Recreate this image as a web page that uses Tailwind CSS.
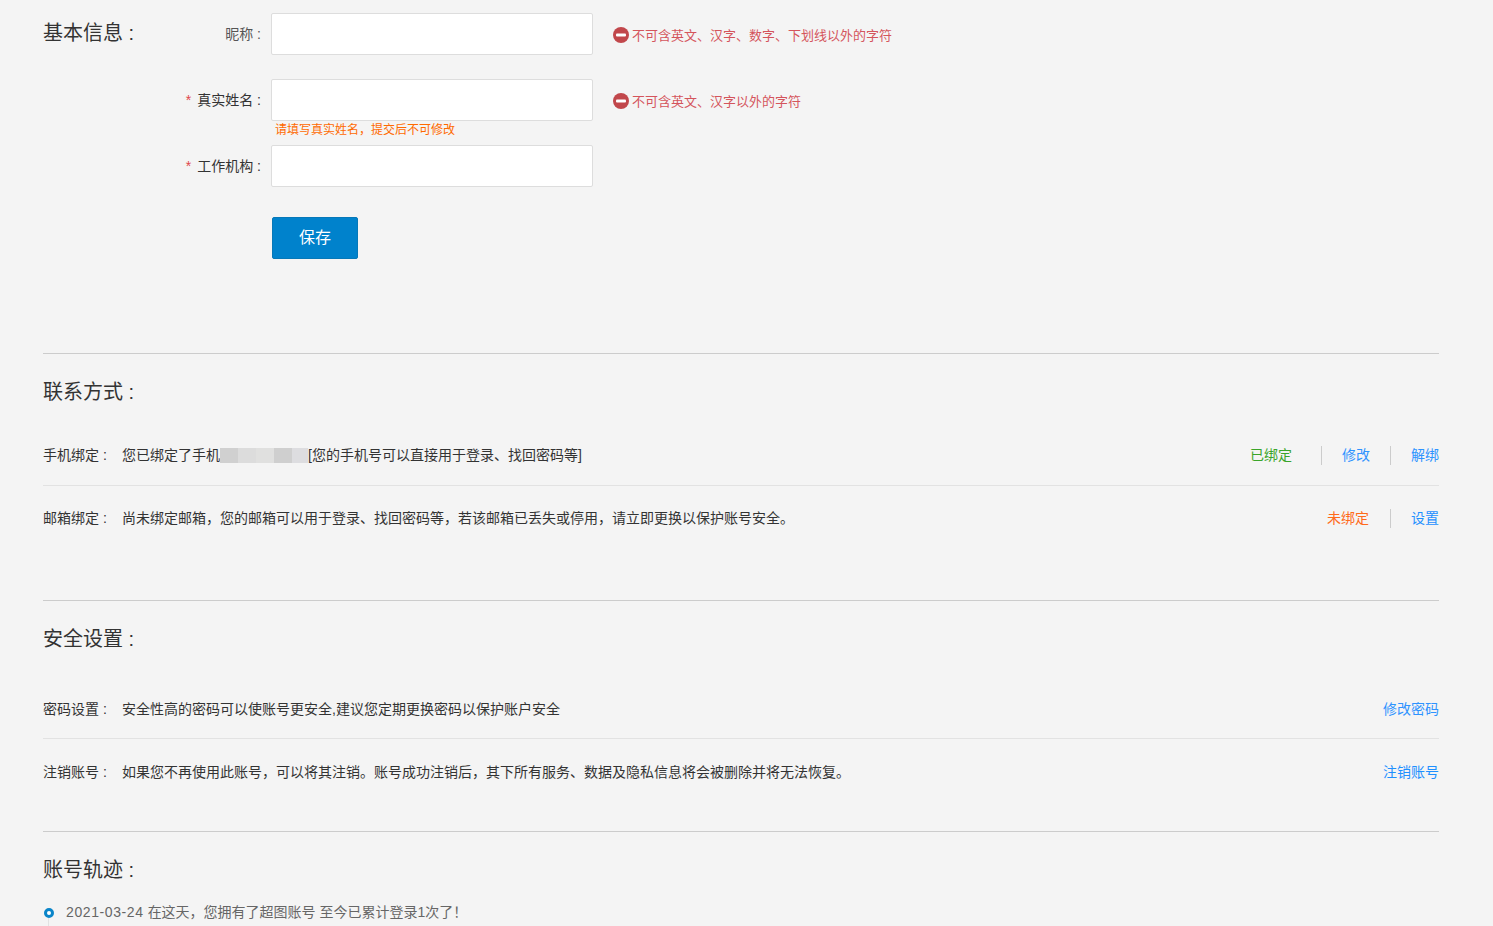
<!DOCTYPE html>
<html lang="zh-CN">
  <head>
    <meta charset="UTF-8" />
    <title>账号设置</title>
    <script src="https://cdn.jsdelivr.net/npm/@tailwindcss/browser@4"></script>
  </head>
  <body class="h-[926px] overflow-hidden bg-[#f4f4f4] font-['Liberation_Sans','Noto_Sans_CJK_SC',sans-serif] text-[14px] text-[#333]">
    <div class="w-[1396px] ml-[43px]">
      <!-- 基本信息 -->
      <section class="h-[340px] pt-[13px] flex box-content">
        <h2 class="w-[128px] h-[42px] text-[20px] leading-[40px] text-[#333]">基本信息 :</h2>
        <div>
          <div class="flex items-start h-[66px]">
            <label class="w-[90px] h-[42px] leading-[42px] text-right text-[#555]">昵称 :</label>
            <input type="text" class="ml-[10px] w-[322px] h-[42px] bg-white border border-[#ddd] rounded-[2px]" />
            <div class="ml-[20px] mt-[1px] h-[42px] flex items-center text-[13px] text-[#d4555c]">
              <svg class="w-[16px] h-[16px] mr-[3px]" viewBox="0 0 16 16"><circle cx="8" cy="8" r="8" fill="#c1474b" /><rect x="3" y="6.5" width="10" height="3" rx="1" fill="#fff" /></svg>
              <span class="pt-[1px]">不可含英文、汉字、数字、下划线以外的字符</span>
            </div>
          </div>
          <div class="flex items-start h-[66px] relative">
            <label class="w-[90px] h-[42px] leading-[42px] text-right"><span class="text-[#e0474c] mr-[6px]">*</span>真实姓名 :</label>
            <input type="text" class="ml-[10px] w-[322px] h-[42px] bg-white border border-[#ddd] rounded-[2px]" />
            <div class="ml-[20px] mt-[1px] h-[42px] flex items-center text-[13px] text-[#d4555c]">
              <svg class="w-[16px] h-[16px] mr-[3px]" viewBox="0 0 16 16"><circle cx="8" cy="8" r="8" fill="#c1474b" /><rect x="3" y="6.5" width="10" height="3" rx="1" fill="#fff" /></svg>
              <span class="pt-[1px]">不可含英文、汉字以外的字符</span>
            </div>
            <p class="absolute left-[104px] top-[42px] text-[12px] leading-[18px] text-[#ff6a00]">请填写真实姓名，提交后不可修改</p>
          </div>
          <div class="flex items-start h-[72px]">
            <label class="w-[90px] h-[42px] leading-[42px] text-right"><span class="text-[#e0474c] mr-[6px]">*</span>工作机构 :</label>
            <input type="text" class="ml-[10px] w-[322px] h-[42px] bg-white border border-[#ddd] rounded-[2px]" />
          </div>
          <button class="ml-[101px] w-[86px] h-[42px] bg-[#0082cc] border border-[#0678b8] rounded-[2px] text-[16px] text-white">保存</button>
        </div>
      </section>

      <!-- 联系方式 -->
      <section class="border-t border-[#ccc] h-[247px]">
        <h2 class="pt-[24px] h-[72px] text-[20px] leading-[28px]">联系方式 :</h2>
        <div class="flex items-center h-[60px] border-b border-[#e2e2e2]">
          <span class="w-[79px]">手机绑定 :</span>
          <span>您已绑定了手机</span>
          <span class="flex h-[15px] w-[88px]">
            <i class="w-[18px] bg-[#d0d0d0]"></i><i class="w-[18px] bg-[#dcdcdc]"></i><i class="w-[18px] bg-[#e0e0df]"></i><i class="w-[18px] bg-[#cfcfcf]"></i><i class="w-[16px] bg-[#dddde0]"></i>
          </span>
          <span>[您的手机号可以直接用于登录、找回密码等]</span>
          <div class="ml-auto flex items-center">
            <span class="text-[#3aa52a]">已绑定</span>
            <i class="ml-[29px] h-[19px] border-l border-[#ccc]"></i>
            <a class="ml-[20px] text-[#2e93ff]">修改</a>
            <i class="ml-[20px] h-[19px] border-l border-[#ccc]"></i>
            <a class="ml-[20px] text-[#2e93ff]">解绑</a>
          </div>
        </div>
        <div class="flex items-center h-[65px]">
          <span class="w-[79px]">邮箱绑定 :</span>
          <span>尚未绑定邮箱，您的邮箱可以用于登录、找回密码等，若该邮箱已丢失或停用，请立即更换以保护账号安全。</span>
          <div class="ml-auto flex items-center">
            <span class="text-[#ff6a1a]">未绑定</span>
            <i class="ml-[21px] h-[19px] border-l border-[#ccc]"></i>
            <a class="ml-[20px] text-[#1e90ff]">设置</a>
          </div>
        </div>
      </section>

      <!-- 安全设置 -->
      <section class="border-t border-[#ccc] h-[231px]">
        <h2 class="pt-[24px] h-[80px] text-[20px] leading-[28px]">安全设置 :</h2>
        <div class="flex items-center h-[58px] border-b border-[#e2e2e2]">
          <span class="w-[79px]">密码设置 :</span>
          <span>安全性高的密码可以使账号更安全,建议您定期更换密码以保护账户安全</span>
          <a class="ml-auto text-[#2e93ff]">修改密码</a>
        </div>
        <div class="flex items-center h-[67px]">
          <span class="w-[79px]">注销账号 :</span>
          <span>如果您不再使用此账号，可以将其注销。账号成功注销后，其下所有服务、数据及隐私信息将会被删除并将无法恢复。</span>
          <a class="ml-auto text-[#1e90ff]">注销账号</a>
        </div>
      </section>

      <!-- 账号轨迹 -->
      <section class="border-t border-[#ccc]">
        <h2 class="pt-[24px] h-[70px] text-[20px] leading-[28px]">账号轨迹 :</h2>
        <div class="relative flex items-center h-[20px] pl-[23px] text-[#666]">
          <i class="absolute left-[1px] top-[6px] w-[10px] h-[10px] rounded-full border-[3px] border-[#0a85c9] bg-white"></i>
          <i class="absolute left-[5px] top-[16px] h-[30px] border-l border-[#e2e2e2]"></i>
          <span class="tracking-[0.6px]">2021-03-24</span>
          <span class="ml-[4px]">在这天，您拥有了超图账号 至今已累计登录1次了！</span>
        </div>
      </section>
    </div>
  </body>
</html>
